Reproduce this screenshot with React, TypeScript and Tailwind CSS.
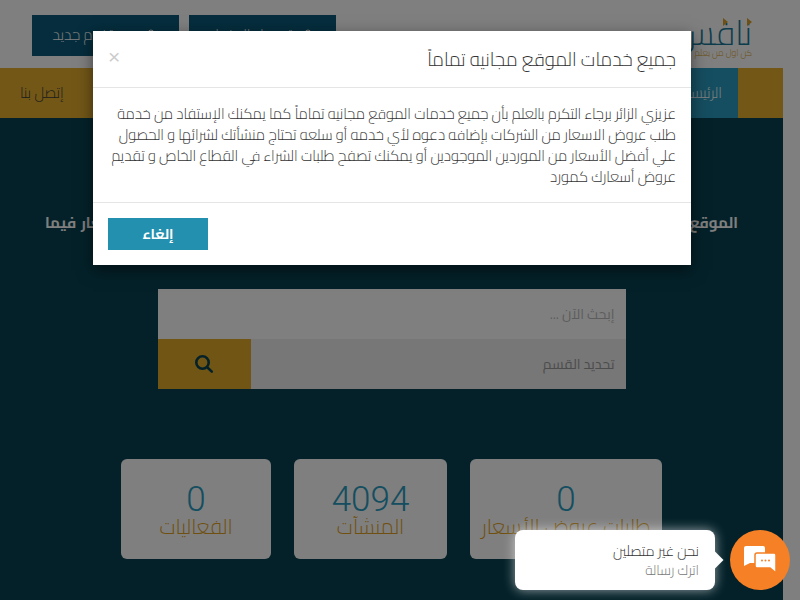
import React from "react";
import { User } from "lucide-react";

const font = { fontFamily: '"Cairo","Noto Sans Arabic","Noto Kufi Arabic","DejaVu Sans",sans-serif' };

function Stat({ n, label, w }: { n: string; label: string; w: string }) {
  return (
    <div className={`h-[100px] ${w} rounded-md bg-white flex flex-col items-center pt-[21px] overflow-hidden`}>
      <div className="text-[35px] leading-[40px] text-[#2a9cc0] font-['Roboto']">{n}</div>
      <div className="text-[21px] leading-[20px] -mt-[3px] font-light text-[#e0a020] whitespace-nowrap">{label}</div>
    </div>
  );
}

export default function App() {
  return (
    <div dir="rtl" style={font} className="relative w-[800px] h-[600px] overflow-hidden bg-white font-light">
      <div className="w-[783px] h-[600px] mr-auto flex flex-col">
        <header className="h-[68px] flex items-start justify-between pt-[15px] pr-[31px] pl-[32px]">
          <div className="relative flex flex-col items-start w-[62px] text-[#1a7a9a]">
            <div className="text-[34px] leading-[30px] mt-[3px] whitespace-nowrap">نافس</div>
            <div className="text-[9px] leading-[10px] text-[#d9a028] whitespace-nowrap">كن اول من يعلم</div>
            <span className="absolute right-0 top-[3px] w-0 h-0 border-y-[4px] border-y-transparent border-l-[5px] border-l-[#d9a028]" />
            <span className="absolute right-[24px] top-[3px] w-0 h-0 border-y-[4px] border-y-transparent border-l-[5px] border-l-[#d9a028]" />
          </div>
          <div className="flex gap-[10px]">
            {["تسجيل الدخول", "مستخدم جديد"].map((t) => (
              <div key={t} className="w-[147px] h-[41px] bg-[#0a5a7a] text-white text-[15px] flex items-center justify-center gap-2">
                <User size={16} strokeWidth={1.5} />
                <span>{t}</span>
              </div>
            ))}
          </div>
        </header>
        <nav className="h-[50px] bg-[#e5ae2e] flex items-stretch text-[15px] text-[#3a3a3a]">
          <div className="w-[45px]" />
          <div className="bg-[#2a9cc0] text-white flex items-center pr-[16px] pl-[40px]">الرئيسية</div>
          <div className="flex items-center mr-auto pl-[20px]">إتصل بنا</div>
        </nav>
        <main className="flex-1 bg-[#094352] flex flex-col items-center">
          <p className="mt-[93px] w-[693px] text-[15px] leading-[24px] font-bold text-white [text-align-last:justify]">
            الموقع الأول لطلبات عروض الأسعار و المناقصات في مصر و التواصل مع الموردين و مقارنة الأسعار فيما
          </p>
          <div className="mt-[54px] w-[468px] flex flex-col">
            <div className="h-[50px] bg-white flex items-center px-[11px] text-[14px] font-normal text-[#bbb]">إبحث الآن ...</div>
            <div className="h-[50px] flex">
              <div className="flex-1 bg-[#eee] flex items-center px-[11px] text-[14px] font-normal text-[#999]">تحديد القسم</div>
              <div className="w-[93px] bg-[#e0aa2a] flex items-center justify-center">
                <svg width="20" height="20" viewBox="0 0 20 20" fill="none" stroke="#094352" strokeWidth="2.6" strokeLinecap="round">
                  <circle cx="8.5" cy="8.5" r="6.2" />
                  <path d="M13.2 13.2l4.6 4.4" />
                </svg>
              </div>
            </div>
          </div>
          <div dir="ltr" className="mt-[70px] w-[541px] flex justify-between">
            <Stat n="0" label="الفعاليات" w="w-[150px]" />
            <Stat n="4094" label="المنشآت" w="w-[153px]" />
            <Stat n="0" label="طلبات عروض الأسعار" w="w-[192px]" />
          </div>
        </main>
      </div>

      <div className="absolute inset-0 bg-black/50" />

      <div className="absolute left-[93px] top-[31px] w-[598px] bg-white shadow-[0_5px_15px_rgba(0,0,0,0.5)] text-[#333]">
        <div className="h-[57px] border-b border-[#e5e5e5] flex items-start justify-between pt-[15px] px-[15px]">
          <h4 className="text-[19px] leading-[26px] font-light">جميع خدمات الموقع مجانيه تماماً</h4>
          <span className="text-[21px] leading-[21px] font-normal text-[#ccc] font-['Liberation_Sans']">×</span>
        </div>
        <p className="h-[115px] border-b border-[#e5e5e5] px-[15px] pt-[15px] text-[14.8px] leading-[21px]">
          عزيزي الزائر برجاء التكرم بالعلم بأن جميع خدمات الموقع مجانيه تماماً كما يمكنك الإستفاد من خدمة طلب عروض الاسعار من الشركات بإضافه دعوه لأي خدمه أو سلعه تحتاج منشأتك لشرائها و الحصول علي أفضل الأسعار من الموردين الموجودين أو يمكنك تصفح طلبات الشراء في القطاع الخاص و تقديم عروض أسعارك كمورد
        </p>
        <div className="h-[62px] flex items-center justify-end px-[15px]">
          <button className="w-[100px] h-[32px] bg-[#2490b0] text-white text-[14px] font-bold">إلغاء</button>
        </div>
      </div>

      <div className="absolute left-[515px] top-[530px] w-[200px] h-[60px] rounded-lg bg-white shadow-[0_0_12px_rgba(255,255,255,0.6)] px-[16px] pt-[11px]">
        <div className="text-[14.5px] leading-[20px] text-[#333]">نحن غير متصلين</div>
        <div className="text-[14px] leading-[18px] text-[#777]">اترك رسالة</div>
        <span className="absolute -right-[6px] top-[24px] w-[12px] h-[12px] rotate-45 bg-white" />
      </div>
      <div className="absolute left-[730px] top-[530px] w-[60px] h-[60px] rounded-full bg-[#f58025] flex items-center justify-center">
        <svg width="32" height="28" viewBox="0 0 32 28">
          <path d="M2 0h17a2 2 0 0 1 2 2v15H6l-6 3V2a2 2 0 0 1 2-2z" fill="#fff" />
          <path d="M13 7h17a2 2 0 0 1 2 2v18l-6-5H13a2 2 0 0 1-2-2V9a2 2 0 0 1 2-2z" fill="#fff" stroke="#f58025" strokeWidth="1.5" />
          <circle cx="18" cy="14.5" r="1" fill="#f58025" />
          <circle cx="21.5" cy="14.5" r="1" fill="#f58025" />
          <circle cx="25" cy="14.5" r="1" fill="#f58025" />
        </svg>
      </div>
    </div>
  );
}
